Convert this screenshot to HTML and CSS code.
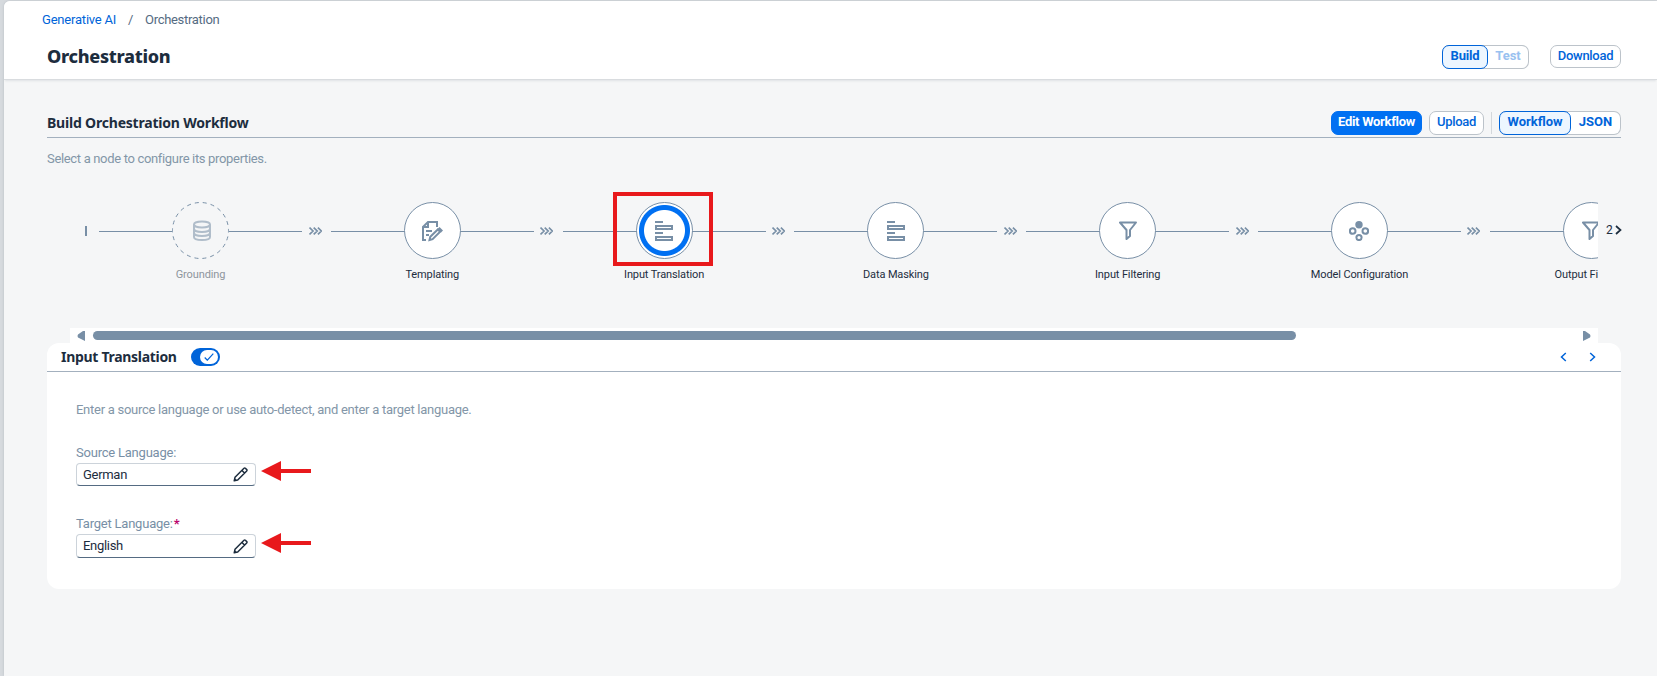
FILE: index.html
```html
<!DOCTYPE html>
<html lang="en">
<head>
<meta charset="utf-8">
<title>Orchestration</title>
<link rel="stylesheet" href="styles.css">
</head>
<body>
<svg class="defs" aria-hidden="true">
  <symbol id="i-db" viewBox="0 0 20 22"><g fill="none" stroke="currentColor" stroke-width="2"><ellipse cx="10" cy="4.500" rx="8" ry="3"/><path d="M2 4.500v12.500c0 1.900 3.500 3 8 3s8-1.100 8-3V4.500M2 9c0 1.700 3.500 3 8 3s8-1.300 8-3M2 13c0 1.700 3.500 3 8 3s8-1.300 8-3"/></g></symbol>
  <symbol id="i-doc" viewBox="0 0 22 22"><g fill="none" stroke="currentColor" stroke-width="2"><path d="M5 20H2V7l5-5h9v5M7 2v5H2M5 11h6M5 15h3"/></g><path fill="none" stroke="currentColor" stroke-width="2" d="M8.500 20l.8-3.200 7.500-7.300 2.300 2.300-7.500 7.400z"/><path fill="currentColor" d="M16.500 9l2-2 3.500 3.500-2 2z"/></symbol>
  <symbol id="i-form" viewBox="0 0 18 20"><path fill="none" stroke="currentColor" stroke-width="2" d="M0 1h8M1 5h16v3H1zM0 12h8M1 16h16v3H1z"/></symbol>
  <symbol id="i-filter" viewBox="0 0 18 19"><path fill="none" stroke="currentColor" stroke-width="2" stroke-linejoin="round" d="M1 1.500h16L11 9v6l-3.500 3V9z"/></symbol>
  <symbol id="i-model" viewBox="0 0 20 20"><circle cx="10" cy="3.700" r="3.700" fill="currentColor"/><g fill="none" stroke="currentColor" stroke-width="2"><circle cx="3.700" cy="10" r="2.800"/><circle cx="16.300" cy="10" r="2.800"/><circle cx="10" cy="16.500" r="2.600"/></g></symbol>
  <symbol id="i-arrows" viewBox="0 0 13 8"><path fill="none" stroke="currentColor" stroke-width="1.700" d="M.5.600L4 4 .5 7.400M4.700.600L8.200 4 4.700 7.400M8.900.600L12.400 4 8.900 7.400"/></symbol>
  <symbol id="i-pen" viewBox="0 0 15 15"><path fill="none" stroke="currentColor" stroke-width="1.500" stroke-linejoin="round" d="M1.200 13.800l.8-3.500 9-9q.7-.6 1.400 0l1.300 1.300q.6.700 0 1.400l-9 9zM9 3.500L11.500 6"/><path fill="currentColor" d="M1 14l.6-3 2.400 2.400z"/></symbol>
  <symbol id="i-red" viewBox="0 0 50 20"><path fill="#e8191c" d="M0 10L20 0v8h30v4H20v8z"/></symbol>
</svg>

<div class="shell">
  <nav class="crumbs"><a class="crumb-link">Generative AI</a><span class="slash">/</span><span class="crumb-now">Orchestration</span></nav>
  <header class="head">
    <h1 class="title">Orchestration</h1>
    <div class="seg seg-head"><button class="seg-on build">Build</button><button class="seg-off test">Test</button></div>
    <button class="btn download">Download</button>
  </header>

  <main class="main">
    <div class="bar">
      <h2 class="bar-title">Build Orchestration Workflow</h2>
      <button class="btn primary">Edit Workflow</button>
      <button class="btn upload">Upload</button>
      <span class="divider"></span>
      <div class="seg"><button class="seg-on wf">Workflow</button><button class="seg-off json">JSON</button></div>
    </div>
    <p class="hint">Select a node to configure its properties.</p>

    <div class="flow-row">
      <div class="flow">
        <span class="start"></span>
        <div class="node off"><div class="track"><span class="disc"><svg class="ring" width="57" height="57" viewBox="0 0 57 57"><circle cx="28.500" cy="28.500" r="28" fill="none" stroke="currentColor" stroke-dasharray="4 4" stroke-dashoffset="2"/></svg><svg class="glyph" width="20" height="22"><use href="#i-db"/></svg></span></div><span class="label">Grounding</span></div>
        <svg class="sep"><use href="#i-arrows"/></svg>
        <div class="node"><div class="track"><span class="disc"><svg width="22" height="22"><use href="#i-doc"/></svg></span></div><span class="label">Templating</span></div>
        <svg class="sep"><use href="#i-arrows"/></svg>
        <div class="node active"><div class="track"><span class="disc"><svg width="18" height="20"><use href="#i-form"/></svg></span></div><span class="label">Input Translation</span><span class="mark"></span></div>
        <svg class="sep"><use href="#i-arrows"/></svg>
        <div class="node"><div class="track"><span class="disc"><svg width="18" height="20"><use href="#i-form"/></svg></span></div><span class="label">Data Masking</span></div>
        <svg class="sep"><use href="#i-arrows"/></svg>
        <div class="node"><div class="track"><span class="disc"><svg width="18" height="19"><use href="#i-filter"/></svg></span></div><span class="label">Input Filtering</span></div>
        <svg class="sep"><use href="#i-arrows"/></svg>
        <div class="node"><div class="track"><span class="disc"><svg width="20" height="20"><use href="#i-model"/></svg></span></div><span class="label">Model Configuration</span></div>
        <svg class="sep"><use href="#i-arrows"/></svg>
        <div class="node"><div class="track"><span class="disc"><svg width="18" height="19"><use href="#i-filter"/></svg></span></div><span class="label">Output Filtering</span></div>
      </div>
      <div class="more">2<svg width="7" height="10" viewBox="0 0 7 10"><path d="M1 1l4.500 4L1 9" fill="none" stroke="currentColor" stroke-width="1.700"/></svg></div>
    </div>

    <div class="scroll">
      <svg width="8" height="10" viewBox="0 0 8 10"><path d="M8 0v10L1 6.500Q0 5 1 3.500L6 0z" fill="currentColor"/></svg>
      <span class="thumb"></span>
      <svg width="8" height="10" viewBox="0 0 8 10"><path d="M0 0v10L7 6.500Q8 5 7 3.500L2 0z" fill="currentColor"/></svg>
    </div>

    <section class="card">
      <div class="card-head">
        <h3 class="card-title">Input Translation</h3>
        <span class="toggle"><span class="knob"><svg width="10" height="8" viewBox="0 0 10 8"><path d="M.7 4.500L3.300 7.200 9.300.6" fill="none" stroke="#0064d9" stroke-width="1.200"/></svg></span></span>
        <span class="arrows">
          <svg width="7" height="10" viewBox="0 0 7 10"><path d="M5.800 1L1.500 5l4.300 4" fill="none" stroke="currentColor" stroke-width="1.500"/></svg>
          <svg width="7" height="10" viewBox="0 0 7 10"><path d="M1.200 1l4.300 4-4.300 4" fill="none" stroke="currentColor" stroke-width="1.500"/></svg>
        </span>
      </div>
      <div class="form">
        <p class="form-hint">Enter a source language or use auto-detect, and enter a target language.</p>
        <label class="field-label">Source Language:</label>
        <div class="field"><span class="value">German</span><svg class="pen"><use href="#i-pen"/></svg><svg class="pointer"><use href="#i-red"/></svg></div>
        <label class="field-label second">Target Language:<b class="req">*</b></label>
        <div class="field tall"><span class="value">English</span><svg class="pen"><use href="#i-pen"/></svg><svg class="pointer"><use href="#i-red"/></svg></div>
      </div>
    </section>
  </main>
</div>
</body>
</html>
```
FILE: styles.css
```css
* { box-sizing: border-box; }
body { margin: 0; height: 676px; overflow: hidden; padding: 1px 0 0 4px; background: #d6dade; font-family: Roboto, "Noto Sans", sans-serif; font-size: 13px; color: #1d2d3e; }
h1, h2, h3, p { margin: 0; }
.defs { display: none; }
.shell { height: 675px; background: #f5f6f7; border-radius: 6px 0 0 0; overflow: hidden; box-shadow: 0 0 3px #b9bec4; }
.crumbs { height: 36px; padding-left: 38px; display: flex; align-items: center; background: #fff; color: #556b82; letter-spacing: -.3px; }
.crumb-link { width: 86px; color: #0064d9; letter-spacing: -.2px; }
.slash { width: 17px; }
.head { height: 43px; padding: 0 36px 0 43px; display: flex; align-items: flex-start; background: #fff; border-bottom: 1px solid #d9dcdf; box-shadow: 0 2px 2px -1px #dfe2e5; }
.title { font: 800 18px/24px "Noto Sans", sans-serif; margin: 7px auto 0 0; letter-spacing: -.3px; }
button { font: 700 13px/20px Roboto, sans-serif; color: #0064d9; padding: 0 0 2px; letter-spacing: -.2px; white-space: nowrap; display: block; }
.btn { height: 24px; border: 1px solid #bcc3ca; border-radius: 7px; background: #fff; font-weight: 500; letter-spacing: -.3px; }
.seg { height: 24px; display: flex; border: 1px solid #bcc3ca; border-left: 0; border-radius: 7px; background: #fff; }
.seg-on { height: 24px; margin-top: -1px; border: 1px solid #0064d9; border-radius: 7px; background: #edf6ff; }
.seg-off { border: 0; background: none; }
.seg-head { margin: 8px 21px 0 0; }
.build { width: 46px; }
.test { width: 40px; color: #99c1f0; letter-spacing: 0; }
.download { width: 71px; height: 23px; margin-top: 8px; }
.main { padding: 31px 36px 0 43px; }
.bar { height: 27px; display: flex; align-items: flex-start; border-bottom: 1px solid #a3b0be; }
.bar-title { font: 700 14px/20px "Noto Sans", sans-serif; margin: 2px auto 0 0; letter-spacing: -.2px; }
.primary { width: 91px; background: #0070f2; border-color: #0070f2; color: #fff; font-weight: 700; letter-spacing: -.3px; }
.upload { width: 55px; margin-left: 7px; }
.divider { width: 1px; height: 22px; margin: 1px 7px 0; background: #d3d7db; }
.wf { width: 72px; letter-spacing: 0; }
.json { width: 49px; letter-spacing: 0; }
.hint { margin: 11px 0 0; line-height: 20px; color: #8396a8; letter-spacing: -.33px; }
.flow-row { display: flex; height: 159px; }
.flow { width: 1551px; display: flex; overflow: hidden; padding: 33px 0 0 38px; flex: none; color: #788fa6; }
.start { flex: none; width: 2px; height: 10px; margin: 24px 12px 0 0; background: #788fa6; }
.node { flex: none; width: 203px; display: flex; flex-direction: column; align-items: center; position: relative; }
.track { width: 100%; height: 57px; display: flex; justify-content: center; align-items: center; background: linear-gradient(#788fa6, #788fa6) 0 29px / 100% 1px no-repeat; }
.disc { width: 57px; height: 57px; border: 1px solid #788fa6; border-radius: 50%; background: #fff; display: flex; align-items: center; justify-content: center; }
.off .disc { position: relative; border: 0; background: #f5f6f7; }
.ring { position: absolute; inset: 0; }
.glyph { opacity: .55; margin-left: 3px; }
.active .disc { background: radial-gradient(circle, #fff 20px, #0070f2 21px, #0070f2 25px, #fff 26px); }
.label { margin-top: 8px; font-size: 11px; line-height: 16px; letter-spacing: -.12px; color: #1d2d3e; white-space: nowrap; }
.off .label { color: #8e959d; }
.sep { flex: none; width: 13px; height: 8px; margin: 25px 9.300px 0 6.500px; }
.mark { position: absolute; left: 50px; top: -10px; width: 100px; height: 74px; border: 4px solid #e8191c; }
.more { padding: 53px 0 0 8px; display: flex; gap: 2px; align-items: flex-start; font-size: 12px; line-height: 16px; }
.more svg { margin-top: 3px; }
.scroll { height: 15px; width: 1528px; margin-left: 23px; padding: 0 7px; display: flex; align-items: center; background: #fff; color: #788fa6; }
.thumb { width: 1203px; height: 9px; margin: 0 auto 0 8px; border-radius: 5px; background: #788fa6; }
.card { height: 246px; background: #fff; border-radius: 12px; }
.card-head { height: 29px; padding: 0 25px 0 14px; display: flex; align-items: center; border-bottom: 1px solid #a3b0be; }
.card-title { width: 116px; font: 700 14px/20px "Noto Sans", sans-serif; letter-spacing: -.3px; white-space: nowrap; }
.toggle { width: 29px; height: 18px; margin-left: 14px; padding: 2px; border-radius: 9px; background: #0064d9; display: flex; justify-content: flex-end; }
.knob { width: 18px; height: 14px; border-radius: 7px; background: #fff; display: flex; align-items: center; justify-content: center; }
.arrows { margin-left: auto; display: flex; gap: 22px; color: #0064d9; }
.form { padding: 28px 29px; }
.form-hint { line-height: 20px; color: #8396a8; letter-spacing: -.27px; }
.field-label { display: block; margin-top: 23px; height: 20px; line-height: 20px; color: #788fa6; letter-spacing: -.22px; }
.second { margin-top: 28px; }
.req { color: #ba066c; margin-left: 1px; }
.field { position: relative; width: 180px; height: 23px; padding: 0 7px 0 6px; display: flex; align-items: center; justify-content: space-between; border: 1px solid #ccd3da; border-bottom-color: #556b82; border-radius: 4px; letter-spacing: -.3px; }
.value { margin-top: -1px; }
.tall { height: 24px; }
.pen { width: 15px; height: 15px; }
.pointer { position: absolute; left: 184px; top: -3px; width: 50px; height: 20px; }
.tall .pointer { top: -2px; }
```
